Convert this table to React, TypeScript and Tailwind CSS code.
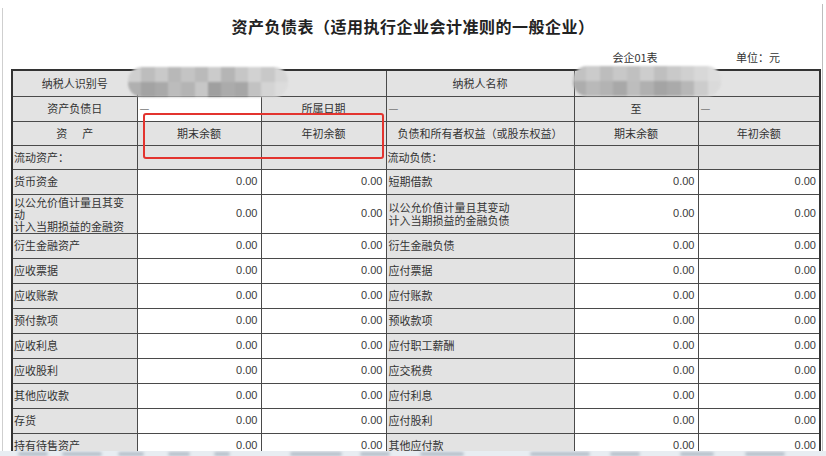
import type { ReactNode } from "react"

type Row = { left: ReactNode; right: ReactNode; tall?: boolean }

const rows: Row[] = [
  { left: "货币资金", right: "短期借款" },
  {
    left: (
      <>
        以公允价值计量且其变
        <br />
        动
        <br />
        计入当期损益的金融资
      </>
    ),
    right: (
      <>
        以公允价值计量且其变动
        <br />
        计入当期损益的金融负债
      </>
    ),
    tall: true,
  },
  { left: "衍生金融资产", right: "衍生金融负债" },
  { left: "应收票据", right: "应付票据" },
  { left: "应收账款", right: "应付账款" },
  { left: "预付款项", right: "预收款项" },
  { left: "应收利息", right: "应付职工薪酬" },
  { left: "应收股利", right: "应交税费" },
  { left: "其他应收款", right: "应付利息" },
  { left: "存货", right: "应付股利" },
  { left: "持有待售资产", right: "其他应付款" },
]

// mosaic blocks used to hide the taxpayer number / name
const mosaicA = [
  ["#cfcfcf", "#bdbdbd", "#c9c9c9", "#b8b8b8", "#c4c4c4", "#bababa", "#cbcbcb", "#b5b5b5", "#c6c6c6", "#d2d2d2", "#c8c8c8", "#d6d6d6"],
  ["#b0b0b0", "#a3a3a3", "#a9a9a9", "#bcbcbc", "#b4b4b4", "#c7c7c7", "#9f9f9f", "#ababab", "#a6a6a6", "#c2c2c2", "#d4d4d4", "#dcdcdc"],
]
const mosaicB = [
  ["#c2c2c2", "#cbcbcb", "#bdbdbd", "#c8c8c8", "#c0c0c0", "#cdcdcd", "#bfbfbf", "#c9c9c9", "#d0d0d0", "#d8d8d8", "#dedede"],
  ["#adadad", "#b9b9b9", "#b3b3b3", "#a8a8a8", "#bdbdbd", "#b0b0b0", "#a4a4a4", "#aaaaaa", "#b7b7b7", "#cccccc", "#dadada"],
]

// blurred bits of the next row peeking in at the very bottom
const smudges = [
  [18, 30], [62, 40], [118, 26], [168, 22], [214, 16], [290, 52], [360, 30], [420, 44], [530, 60], [610, 30], [680, 34], [745, 40],
]

function Mosaic({ grid, className }: { grid: string[][]; className: string }) {
  return (
    <div className={`absolute flex flex-col overflow-hidden rounded-[14px] blur-[1px] ${className}`}>
      {grid.map((line, i) => (
        <div key={i} className="flex flex-1">
          {line.map((c, j) => (
            <div key={j} className="flex-1" style={{ backgroundColor: c }} />
          ))}
        </div>
      ))}
    </div>
  )
}

const cell = "border border-[#4a4a4a] p-0 align-middle"
const gray = `${cell} bg-[#e3e3e3]`
const label = `${gray} text-left pl-[1px]`
const num = `${cell} bg-white text-right pr-[3px] font-['Liberation_Sans',sans-serif] text-[#3a3a3a]`

export default function App() {
  return (
    <div className="relative w-[826px] h-[456px] overflow-hidden bg-white font-['Noto_Sans_CJK_SC',sans-serif] text-[11px] text-[#333]">
      {/* window frame lines */}
      <div className="absolute left-[2px] top-[8px] bottom-0 w-px bg-[#cfcfcf]" />
      <div className="absolute right-[3px] top-[4px] bottom-0 w-px bg-[#bdbdbd]" />

      <div className="pt-[16px] text-center">
        <h1 className="text-[16px] leading-[20px] font-bold text-[#222] tracking-[0.5px]">
          资产负债表（适用执行企业会计准则的一般企业）
        </h1>
      </div>

      <div className="mt-[14px] ml-[11px] flex h-[14px] leading-[14px]">
        <div className="w-[562px]" />
        <div className="w-[124px] text-center">会企01表</div>
        <div className="w-[122px] text-center">单位：元</div>
      </div>

      <table className="mt-[5px] ml-[11px] w-[808px] table-fixed border-collapse border-2 border-[#333] leading-[13px]">
        <colgroup>
          <col className="w-[125px]" />
          <col className="w-[124px]" />
          <col className="w-[125px]" />
          <col className="w-[188px]" />
          <col className="w-[124px]" />
          <col className="w-[122px]" />
        </colgroup>
        <tbody>
          <tr className="h-[26px]">
            <td className={`${gray} text-center`}>纳税人识别号</td>
            <td colSpan={2} className={gray} />
            <td className={`${gray} text-center`}>纳税人名称</td>
            <td colSpan={2} className={gray} />
          </tr>
          <tr className="h-[25px]">
            <td className={`${gray} text-center`}>资产负债日</td>
            <td className={`${cell} bg-white pl-[2px] text-left text-[#777]`}>—</td>
            <td className={`${gray} text-center`}>所属日期</td>
            <td className={`${gray} pl-[2px] text-left text-[#777]`}>—</td>
            <td className={`${gray} text-center`}>至</td>
            <td className={`${gray} pl-[2px] text-left text-[#777]`}>—</td>
          </tr>
          <tr className="h-[24px]">
            <td className={`${gray} text-center`}>资&nbsp;&nbsp;&nbsp;&nbsp;&nbsp;&nbsp;产</td>
            <td className={`${gray} text-center`}>期末余额</td>
            <td className={`${gray} text-center`}>年初余额</td>
            <td className={`${gray} text-center`}>负债和所有者权益（或股东权益）</td>
            <td className={`${gray} text-center`}>期末余额</td>
            <td className={`${gray} text-center`}>年初余额</td>
          </tr>
          <tr className="h-[24px]">
            <td className={label}>流动资产：</td>
            <td className={gray} />
            <td className={gray} />
            <td className={label}>流动负债：</td>
            <td className={gray} />
            <td className={gray} />
          </tr>
          {rows.map((r, i) => (
            <tr key={i} className={r.tall ? "h-[39px]" : "h-[25px]"}>
              <td className={`${label} ${r.tall ? "leading-[12px]" : ""}`}>{r.left}</td>
              <td className={num}>0.00</td>
              <td className={num}>0.00</td>
              <td className={`${label} pl-[2px] ${r.tall ? "leading-[13px]" : ""}`}>{r.right}</td>
              <td className={num}>0.00</td>
              <td className={num}>0.00</td>
            </tr>
          ))}
        </tbody>
      </table>

      {/* blurred values */}
      <Mosaic grid={mosaicA} className="left-[128px] top-[67px] w-[160px] h-[30px]" />
      <Mosaic grid={mosaicB} className="left-[573px] top-[66px] w-[148px] h-[30px]" />

      {/* highlight box */}
      <div className="absolute left-[143px] top-[113px] w-[241px] h-[46px] rounded-[3px] border-2 border-[#e3342f]" />

      {/* next row fading out at the bottom */}
      <div className="absolute left-0 right-0 bottom-0 h-[5px] overflow-hidden bg-[#e8edf2]">
        {smudges.map(([x, w], i) => (
          <div
            key={i}
            className="absolute top-[1px] h-[4px] rounded-[2px] bg-[#8593a3] opacity-50 blur-[1.5px]"
            style={{ left: x, width: w }}
          />
        ))}
      </div>
    </div>
  )
}
